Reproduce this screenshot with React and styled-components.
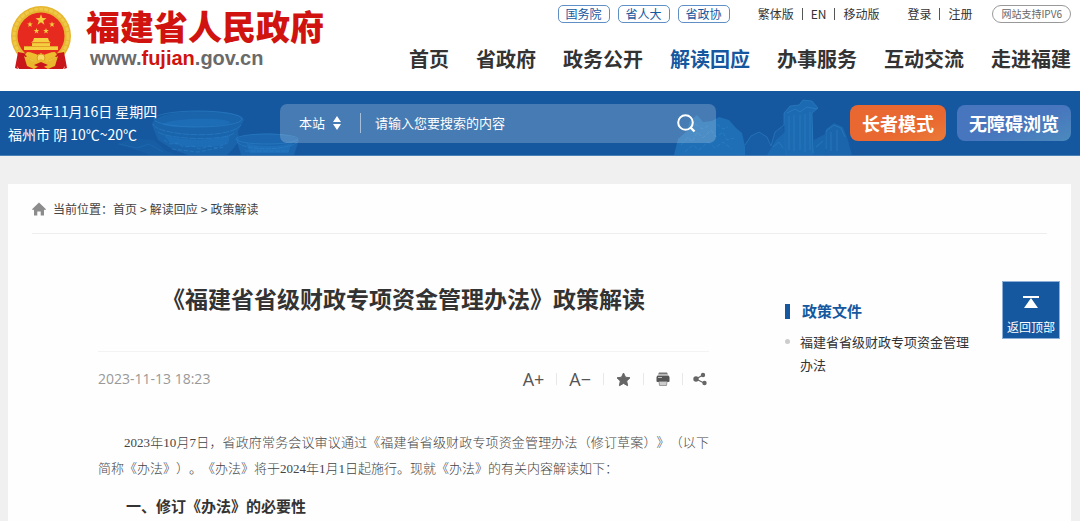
import React from "react";
import styled, { createGlobalStyle } from "styled-components";

const blue = "#15589f";

const GlobalStyle = createGlobalStyle`
  *, *::before, *::after { box-sizing: border-box; }
  html { overflow-x: hidden; }
  body {
    margin: 0;
    background: #f0f0f0;
    color: #333;
    font-family: "Noto Sans CJK SC", "Liberation Sans", sans-serif;
    font-size: 13px;
  }
  a { color: inherit; text-decoration: none; }
  button, input, select { font: inherit; color: inherit; }
  button { cursor: pointer; }
  h1, h2, p, ul { margin: 0; padding: 0; }
  ul { list-style: none; }
`;

const Header = styled.header`
  display: flex;
  justify-content: space-between;
  height: 91px;
  padding: 5px 9px 0 10px;
  background: #fff;
`;

const Brand = styled.a`
  display: flex;
  align-items: flex-start;
  gap: 14px;
`;

const BrandText = styled.div`
  display: flex;
  flex-direction: column;
`;

const BrandName = styled.span`
  color: #d0130e;
  font-size: 34px;
  font-weight: 900;
  line-height: 42px;
  white-space: nowrap;
`;

const BrandUrl = styled.span`
  padding-left: 4px;
  color: #6a6a6a;
  font: bold 20px/22px "Liberation Sans", Arial, sans-serif;

  em {
    color: #d0130e;
    font-style: normal;
  }
`;

const HeaderRight = styled.div`
  display: flex;
  flex-direction: column;
  align-items: flex-end;
`;

const TopLinks = styled.div`
  display: flex;
  align-items: center;
  gap: 28px;
  height: 18px;
  font-size: 12px;
  line-height: 18px;
  white-space: nowrap;
`;

const PillGroup = styled.div`
  display: flex;
  gap: 8px;
`;

const Pill = styled.a`
  padding: 0 7px;
  border: 1px solid #5f8fc4;
  border-radius: 5px;
  color: ${blue};
  line-height: 16px;
`;

const LinkGroup = styled.div`
  display: flex;
  align-items: center;

  a + a {
    display: flex;
    align-items: center;
  }

  a + a::before {
    content: "";
    width: 1px;
    height: 12px;
    margin: 0 8px;
    background: #555;
  }
`;

const Ipv6Badge = styled.span`
  margin-left: -8px;
  padding: 0 8px;
  border: 1px solid #999;
  border-radius: 9px;
  color: #666;
  font-size: 10px;
  line-height: 16px;
`;

const Nav = styled.nav`
  display: flex;
  gap: 27px;
  margin-top: 22px;
  font-size: 20px;
  font-weight: 700;
  line-height: 28px;
  white-space: nowrap;
`;

const NavLink = styled.a`
  color: ${(p) => (p.$active ? blue : "#333")};
`;

const Banner = styled.section`
  position: relative;
  display: flex;
  align-items: center;
  height: 65px;
  padding: 0 9px 0 8px;
  border-bottom: 1px solid #4a80b8;
  background: ${blue};
  color: #fff;
`;

const Scenery = styled.svg`
  position: absolute;
  bottom: 0;
  left: ${(p) => p.$left || "auto"};
  right: ${(p) => p.$right || "auto"};
`;

const Weather = styled.div`
  position: relative;
  flex: 0 0 272px;
  font-size: 14px;
  line-height: 23px;
  white-space: nowrap;
`;

const SearchForm = styled.form`
  position: relative;
  display: flex;
  flex: 1;
  align-items: center;
  height: 39px;
  margin-right: 134px;
  padding: 0 20px 0 19px;
  border-radius: 7px;
  background: rgba(255, 255, 255, 0.21);
`;

const ScopeField = styled.label`
  display: flex;
  align-items: center;
  width: 62px;
  height: 20px;
  border-right: 1px solid #a5bedb;
`;

const ScopeSelect = styled.select`
  width: 34px;
  padding: 0;
  border: 0;
  outline: 0;
  background: transparent;
  line-height: 20px;
  appearance: none;

  option { color: #333; }
`;

const SearchInput = styled.input`
  flex: 1;
  min-width: 0;
  padding: 0 14px;
  border: 0;
  outline: 0;
  background: transparent;
  line-height: 20px;

  &::placeholder { color: #fff; opacity: 1; }
`;

const IconButton = styled.button`
  display: flex;
  padding: 0;
  border: 0;
  background: transparent;
`;

const Modes = styled.div`
  position: relative;
  display: flex;
  gap: 11px;
`;

const ModeButton = styled.button`
  height: 36px;
  padding: 0 12px;
  border: 0;
  border-radius: 8px;
  background: ${(p) =>
    p.$warm
      ? "linear-gradient(160deg, #e96730 60%, #ea7b39)"
      : "linear-gradient(160deg, #4775be 50%, #4b8abd)"};
  font-size: 18px;
  font-weight: 700;
  line-height: 36px;
  white-space: nowrap;
`;

const Page = styled.main`
  min-height: calc(100vh - 184px);
  margin: 28px 9px 0 8px;
  background: #fefefe;
`;

const Breadcrumb = styled.nav`
  display: flex;
  align-items: center;
  gap: 3px;
  height: 50px;
  margin: 0 24px;
  border-bottom: 1px solid #eee;
  color: #444;
  font-size: 12px;
  line-height: 18px;

  svg { margin-right: 4px; }
`;

const Columns = styled.div`
  display: flex;
  align-items: flex-start;
  gap: 76px;
  padding: 0 100px 0 90px;
`;

const Article = styled.article`
  flex: 1;
  min-width: 0;
`;

const Title = styled.h1`
  padding: 47px 0 36px;
  border-bottom: 1px solid #f3f3f3;
  font-size: 23px;
  font-weight: 700;
  line-height: 34px;
  text-align: center;
  text-spacing-trim: space-all;
`;

const MetaRow = styled.div`
  display: flex;
  align-items: center;
  justify-content: space-between;
  height: 54px;
  color: #999;
  font: 14px/20px "Open Sans", "Liberation Sans", sans-serif;
`;

const Tools = styled.div`
  display: flex;
  align-items: center;
`;

const Tool = styled.button`
  display: flex;
  align-items: center;
  height: 12px;
  padding: 0 12px;
  border: 0;
  border-right: 1px solid #e8e8e8;
  background: transparent;
  color: #555;
  font-size: 18px;

  &:last-child { padding-right: 2px; border-right: 0; padding-left: 10px; }
`;

const Body = styled.div`
  padding-top: 24px;
  color: #444;
  font: 13px/26px "Liberation Serif", "Noto Sans CJK SC", serif;
  text-spacing-trim: space-all;

  p {
    font-weight: 300;
    text-align: justify;
    text-indent: 2em;
  }
`;

const SectionTitle = styled.h2`
  padding: 12px 0 0 28px;
  color: #333;
  font-size: 15px;
  font-weight: 700;
  line-height: 26px;
`;

const Sidebar = styled.aside`
  flex: 0 0 186px;
  padding-top: 66px;
`;

const SideTitle = styled.h2`
  display: flex;
  align-items: center;
  gap: 12px;
  color: ${blue};
  font-size: 15px;
  font-weight: 700;
  line-height: 22px;

  &::before {
    content: "";
    width: 5px;
    height: 15px;
    background: ${blue};
  }
`;

const SideItem = styled.li`
  display: flex;
  gap: 10px;
  margin-top: 8px;
  font-size: 13px;
  line-height: 23px;

  &::before {
    content: "";
    flex: 0 0 5px;
    height: 5px;
    margin-top: 9px;
    border-radius: 50%;
    background: #ccc;
  }
`;

const BackToTop = styled.button`
  position: fixed;
  top: 281px;
  right: 20px;
  display: flex;
  flex-direction: column;
  align-items: center;
  gap: 10px;
  width: 58px;
  height: 58px;
  padding: 14px 0 0;
  border: 1px solid #8fb0d6;
  background: ${blue};
  color: #fff;
  font-size: 12px;
  line-height: 18px;
  white-space: nowrap;
`;

const star = (cx, cy, r) =>
  Array.from({ length: 10 }, (_, i) => {
    const a = -Math.PI / 2 + (i * Math.PI) / 5;
    const d = i % 2 ? r * 0.4 : r;
    return `${(cx + d * Math.cos(a)).toFixed(2)},${(cy + d * Math.sin(a)).toFixed(2)}`;
  }).join(" ");

const Emblem = () => (
  <svg width="62" height="66" viewBox="0 0 62 66" aria-hidden="true">
    <circle cx="31" cy="31" r="30" fill="#e6b630" />
    <circle cx="31" cy="31" r="27" fill="none" stroke="#efc848" strokeWidth="3" strokeDasharray="4 1" />
    <circle cx="31" cy="31" r="23.5" fill="#e72a20" />
    <g fill="#f5cf3f">
      <polygon points={star(31, 15, 5.8)} />
      <polygon points={star(20, 19.5, 3)} />
      <polygon points={star(42, 19.5, 3)} />
      <polygon points={star(26.5, 26, 3)} />
      <polygon points={star(36, 26, 3)} />
      <path d="M24 33h14l1 3 2 1.500H21l2-1.500zM22 38h18v3h8v4H14v-4h8z" />
    </g>
    <path d="M14 41.500h34M22 37.800h18" stroke="#d98e1d" strokeWidth=".7" />
    <path d="M8 47l10 2-3 5 9 10H9L7 61l1 3-3-1z" fill="#c9161b" />
    <path d="M54 47l-10 2 3 5-9 10h15l2-3-1 3 3-1z" fill="#c9161b" />
    <path d="M20 64l11-6 11 6z" fill="#d8151b" />
    <path d="M17 47c5 0 8 2 11 3l3-2 3 2c3-1 6-3 11-3l2 3-10 5-2 3h-8l-2-3-10-5z" fill="#edbd2f" />
    <circle cx="31" cy="53" r="4" fill="#f6d862" stroke="#d99a20" strokeWidth="1" />
    <path d="M14 51l10 6 7-3 7 3 10-6-3 10-7 3-7-4-7 4-7-3z" fill="#e9b62d" />
    <path d="M24 60l7 3 7-3-7-3z" fill="#c9161b" />
  </svg>
);

const Tulou = () => (
  <Scenery width="220" height="54" viewBox="0 0 220 54" $left="100px" aria-hidden="true">
    <g fill="#2174bf">
      <path d="M52 24c0-9 22-14 50-14s42 4 42 9l-6 11 1 10-6 8-6 6H88l-16-6-14-9z" opacity=".42" />
      <path d="M136 38c8-7 53-8 63 1l-5 15h-53z" opacity=".5" />
      <path d="M16 43l17-6 21 2 11 10 12 5H50l-20-7z" opacity=".18" />
      <path d="M62 23c12-6 60-7 68-2 3 5-64 8-68 2zM64 34c18 6 48 6 66 0l-2 9c-18 5-42 4-58-1zM146 42c14 4 32 4 46 0l-4 10h-38z" opacity=".55" />
    </g>
    <g fill="none" stroke="#2c80c7" strokeWidth="1" opacity=".6">
      <ellipse cx="98" cy="18" rx="44" ry="8" />
      <path d="M53 23c4 12 77 16 88 1M58 31c12 8 68 9 76 1" strokeDasharray="7 1" />
      <path d="M64 39l6 4 8-1 5 4 9-1 8 3 9-3 8 2 9-5M72 48l26 3 26-5" strokeDasharray="4 2" />
      <ellipse cx="167" cy="38" rx="31" ry="5" />
      <path d="M137 41c8 9 52 9 60 0M145 50h44" strokeDasharray="5 1" />
      <path d="M19 43l18 4 12-4 14 8" opacity=".5" />
    </g>
  </Scenery>
);

const Mountains = () => (
  <Scenery width="190" height="58" viewBox="0 0 190 58" $right="219px" aria-hidden="true">
    <g fill="#2277be">
      <path d="M3 58l4-16 9-8 3-10 7-6 6 7 9-1 7-4 10 3 7 8 6 5 3 13v9z" opacity=".75" />
      <path d="M74 48l6-9 8-4 8 5 4 9 4-14 8-6 5 29H71z" opacity=".22" />
      <path d="M114 58l-1-42 6-7 9-1 4-5 9 1 6 7-6 5 2 42z" opacity=".6" />
      <path d="M154 58l1-26 8-6 9 4 4 10 5 18z" opacity=".42" />
      <path d="M96 58l9-15 9-8v23zM143 58v-15l11-6v21z" opacity=".45" />
    </g>
    <g fill="none" stroke="#3388cb" strokeWidth="1" opacity=".5">
      <path d="M74 48l6-9 8-4 8 5 4 9 4-14 9-7V16l6-7 9-1 4-5 9 1 6 7-6 5 1 40" />
      <path d="M116 16l8-4 5 3 7-5 10 2M118 19v34M123 18v36M129 18v35M134 17v38M139 15v38" />
      <path d="M10 48l7-8 4 5 5-10 6 6 8-8 5 7 7-5 4 8 7-2M14 55l8-7 6 5 9-8 7 6 8-6 9 7M24 27l7 5 6-3M46 27l6 5 5-2" strokeDasharray="4 2" />
      <path d="M155 52V34l8-6 7 3 4 9M160 54V35M166 54V33M102 50l6-5 4 6M145 50l7-6" />
    </g>
  </Scenery>
);

const navItems = ["首页", "省政府", "政务公开", "解读回应", "办事服务", "互动交流", "走进福建"];

export default function App() {
  return (
    <>
      <GlobalStyle />
      <Header>
        <Brand href="#">
          <Emblem />
          <BrandText>
            <BrandName>福建省人民政府</BrandName>
            <BrandUrl>www.<em>fujian</em>.gov.cn</BrandUrl>
          </BrandText>
        </Brand>
        <HeaderRight>
          <TopLinks>
            <PillGroup>
              <Pill href="#">国务院</Pill>
              <Pill href="#">省人大</Pill>
              <Pill href="#">省政协</Pill>
            </PillGroup>
            <LinkGroup>
              <a href="#">繁体版</a>
              <a href="#">EN</a>
              <a href="#">移动版</a>
            </LinkGroup>
            <LinkGroup>
              <a href="#">登录</a>
              <a href="#">注册</a>
            </LinkGroup>
            <Ipv6Badge>网站支持IPV6</Ipv6Badge>
          </TopLinks>
          <Nav aria-label="主导航">
            {navItems.map((item) => (
              <NavLink key={item} href="#" $active={item === "解读回应"}>{item}</NavLink>
            ))}
          </Nav>
        </HeaderRight>
      </Header>

      <Banner>
        <Tulou />
        <Mountains />
        <Weather>
          <div>2023年11月16日 星期四</div>
          <div>福州市 阴 10℃~20℃</div>
        </Weather>
        <SearchForm onSubmit={(e) => e.preventDefault()}>
          <ScopeField>
            <ScopeSelect aria-label="搜索范围">
              <option>本站</option>
            </ScopeSelect>
            <svg width="8" height="14" viewBox="0 0 8 14" fill="#fff" aria-hidden="true">
              <path d="M4 0l4 6H0zM4 14l4-6H0z" />
            </svg>
          </ScopeField>
          <SearchInput type="text" aria-label="搜索内容" placeholder="请输入您要搜索的内容" />
          <IconButton type="submit" aria-label="搜索">
            <svg width="19" height="19" viewBox="0 0 19 19" fill="none" stroke="#fff" strokeWidth="2" aria-hidden="true">
              <circle cx="8.5" cy="8.5" r="7.3" />
              <path d="M13.5 13.5l4 4" strokeWidth="2.4" />
            </svg>
          </IconButton>
        </SearchForm>
        <Modes>
          <ModeButton type="button" $warm>长者模式</ModeButton>
          <ModeButton type="button">无障碍浏览</ModeButton>
        </Modes>
      </Banner>

      <Page>
        <Breadcrumb aria-label="当前位置">
          <svg width="14" height="14" viewBox="0 0 14 14" fill="#8c8c8c" aria-hidden="true">
            <path d="M7 0.500L14 7.200l-1 1-1-.6V13.500H8.700V9.500H5.300v4H2V7.600l-1 .6-1-1z" />
          </svg>
          <span>当前位置：<a href="#">首页</a></span>
          <span>&gt;</span>
          <a href="#">解读回应</a>
          <span>&gt;</span>
          <a href="#">政策解读</a>
        </Breadcrumb>
        <Columns>
          <Article>
            <Title>《福建省省级财政专项资金管理办法》政策解读</Title>
            <MetaRow>
              <time>2023-11-13 18:23</time>
              <Tools>
                <Tool type="button" aria-label="放大字号">A+</Tool>
                <Tool type="button" aria-label="缩小字号">A−</Tool>
                <Tool type="button" aria-label="收藏">
                  <svg width="15" height="15" viewBox="0 0 15 15" fill="#666" stroke="#666" strokeLinejoin="round" aria-hidden="true">
                    <path d="M7.500 1l2 4.200 4.500.6-3.300 3.200.9 4.700-4.100-2.300-4.100 2.300.9-4.700L1 5.800l4.500-.6z" />
                  </svg>
                </Tool>
                <Tool type="button" aria-label="打印">
                  <svg width="14" height="14" viewBox="0 0 14 14" aria-hidden="true">
                    <path d="M3 .5h8l1 2H2z" fill="#777" />
                    <path d="M1.500 3.500h11l1 1.500v4.500l-1 .5h-11l-1-.5V5z" fill="#555" />
                    <path d="M2 5.500h4" stroke="#bbb" />
                    <path d="M3 9.500h8l-.5 4h-7z" fill="#ccc" stroke="#888" strokeWidth=".8" />
                  </svg>
                </Tool>
                <Tool type="button" aria-label="分享">
                  <svg width="14" height="14" viewBox="0 0 14 14" fill="#666" aria-hidden="true">
                    <path d="M10 3L3 7l8 4" fill="none" stroke="#666" strokeWidth="1.2" />
                    <circle cx="10" cy="3" r="2.2" />
                    <circle cx="3" cy="7" r="2.7" />
                    <circle cx="11.500" cy="11" r="2.2" />
                  </svg>
                </Tool>
              </Tools>
            </MetaRow>
            <Body>
              <p>
                2023年10月7日，省政府常务会议审议通过《福建省省级财政专项资金管理办法（修订草案）》（以下简称《办法》）。《办法》将于2024年1月1日起施行。现就《办法》的有关内容解读如下：
              </p>
              <SectionTitle>一、修订《办法》的必要性</SectionTitle>
            </Body>
          </Article>
          <Sidebar>
            <SideTitle>政策文件</SideTitle>
            <ul>
              <SideItem><a href="#">福建省省级财政专项资金管理办法</a></SideItem>
            </ul>
          </Sidebar>
        </Columns>
      </Page>

      <BackToTop type="button">
        <svg width="16" height="12" viewBox="0 0 16 12" fill="#fff" aria-hidden="true">
          <path d="M0 0h16v2H0zM8 2l7 10H1z" />
        </svg>
        返回顶部
      </BackToTop>
    </>
  );
}
